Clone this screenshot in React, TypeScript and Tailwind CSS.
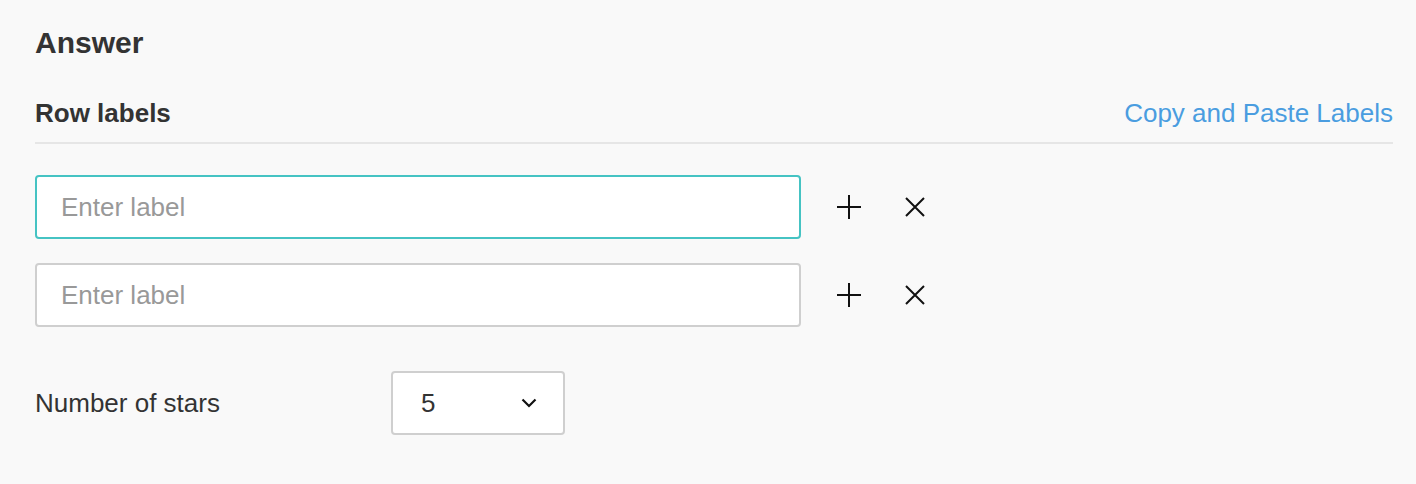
import { useState } from "react";

type LabelRowProps = {
  focused?: boolean;
};

function PlusIcon() {
  return (
    <svg width="24" height="24" viewBox="0 0 24 24" fill="none" stroke="#111" strokeWidth="2">
      <path d="M12 0v24M0 12h24" />
    </svg>
  );
}

function CloseIcon() {
  return (
    <svg width="20" height="20" viewBox="0 0 20 20" fill="none" stroke="#111" strokeWidth="2">
      <path d="M1 1l18 18M19 1L1 19" />
    </svg>
  );
}

function LabelRow({ focused }: LabelRowProps) {
  return (
    <div className="flex items-center">
      <input
        placeholder="Enter label"
        className={`h-16 w-[766px] rounded-[4px] border-2 bg-white px-6 text-[26px] text-[#333] outline-none placeholder:text-[#999] ${
          focused ? "border-[#45c3c3]" : "border-[#cfcfcf]"
        }`}
      />
      <button className="ml-9 flex h-6 w-6 items-center justify-center">
        <PlusIcon />
      </button>
      <button className="ml-[42px] flex h-6 w-6 items-center justify-center">
        <CloseIcon />
      </button>
    </div>
  );
}

export default function App() {
  const [stars] = useState("5");

  return (
    <main className="min-h-screen bg-[#f9f9f9] pl-[35px] pr-[23px] pt-[25px] font-['Liberation_Sans',Arial,sans-serif] text-[#333]">
      <h1 className="text-[30px] font-bold leading-[36px]">Answer</h1>

      <div className="mt-9 flex items-center justify-between border-b-2 border-[#e6e6e6] pb-[13px]">
        <h2 className="text-[26px] font-bold leading-[32px]">Row labels</h2>
        <a href="#" className="text-[26px] leading-[32px] text-[#4a9de0]">
          Copy and Paste Labels
        </a>
      </div>

      <div className="mt-[31px] flex flex-col gap-6">
        <LabelRow focused />
        <LabelRow />
      </div>

      <div className="mt-11 flex items-center">
        <span className="w-[356px] text-[26px] leading-[32px]">Number of stars</span>
        <div className="flex h-16 w-[174px] items-center justify-between rounded-[4px] border-2 border-[#cfcfcf] bg-white pl-7 pr-[26px]">
          <span className="text-[26px] leading-[32px]">{stars}</span>
          <svg width="16" height="10" viewBox="0 0 16 10" fill="none" stroke="#111" strokeWidth="2.2">
            <path d="M1.5 1.5L8 8l6.5-6.5" />
          </svg>
        </div>
      </div>
    </main>
  );
}
